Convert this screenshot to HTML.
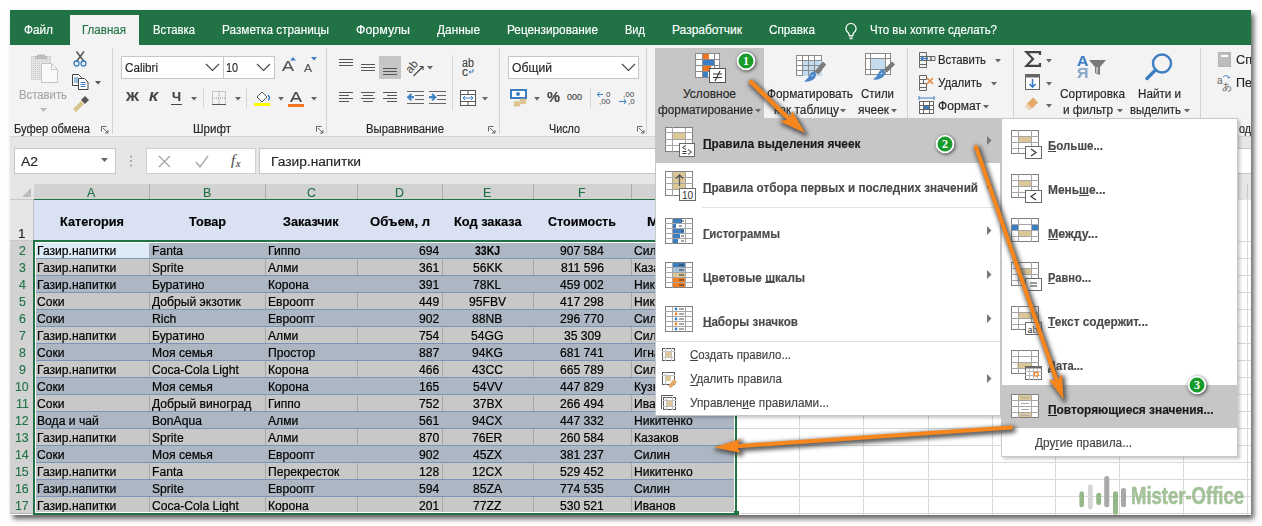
<!DOCTYPE html>
<html><head><meta charset="utf-8"><style>
html,body{margin:0;padding:0;width:1262px;height:526px;overflow:hidden;background:#fff;}
body{position:relative;font-family:"Liberation Sans",sans-serif;}
.r{position:absolute;box-sizing:border-box;}
svg.r{overflow:visible;}
.t{position:absolute;white-space:nowrap;line-height:1;transform-origin:0 0;font-family:"Liberation Sans",sans-serif;-webkit-text-stroke:0.15px currentColor;}
</style></head><body>
<div class="r" style="left:10px;top:10px;width:1241px;height:505px;background:#fff;box-shadow:3px 4px 5px rgba(0,0,0,0.6);"></div>
<div class="r" style="left:10px;top:10px;width:1241px;height:505px;overflow:hidden;"><div class="r" style="left:-10px;top:-10px;width:1262px;height:526px;">
<div class="r" style="left:10px;top:10px;width:1241px;height:35px;background:#217346;"></div>
<div class="r" style="left:70px;top:15px;width:69px;height:30px;background:#f3f3f3;"></div>
<div class="t" style="left:24.0px;top:24.1px;font-size:12px;color:#ffffff;transform:scaleX(0.9830);">Файл</div>
<div class="t" style="left:82.0px;top:24.1px;font-size:12px;color:#217346;transform:scaleX(0.9634);">Главная</div>
<div class="t" style="left:153.0px;top:24.1px;font-size:12px;color:#ffffff;transform:scaleX(0.9417);">Вставка</div>
<div class="t" style="left:222.0px;top:24.1px;font-size:12px;color:#ffffff;transform:scaleX(0.9829);">Разметка страницы</div>
<div class="t" style="left:356.0px;top:24.1px;font-size:12px;color:#ffffff;transform:scaleX(1.0341);">Формулы</div>
<div class="t" style="left:437.0px;top:24.1px;font-size:12px;color:#ffffff;transform:scaleX(0.9919);">Данные</div>
<div class="t" style="left:507.0px;top:24.1px;font-size:12px;color:#ffffff;transform:scaleX(0.9821);">Рецензирование</div>
<div class="t" style="left:625.0px;top:24.1px;font-size:12px;color:#ffffff;transform:scaleX(0.9213);">Вид</div>
<div class="t" style="left:672.0px;top:24.1px;font-size:12px;color:#ffffff;">Разработчик</div>
<div class="t" style="left:769.0px;top:24.1px;font-size:12px;color:#ffffff;transform:scaleX(0.9772);">Справка</div>
<div class="t" style="left:870.0px;top:24.1px;font-size:12px;color:#ffffff;transform:scaleX(0.9574);">Что вы хотите сделать?</div>
<svg class="r" style="left:843px;top:22px;" width="16" height="18" viewBox="0 0 16 18"><path d="M8 1.5a5 5 0 0 0-3 9c.6.5 1 1.2 1 2v1h4v-1c0-.8.4-1.5 1-2a5 5 0 0 0-3-9z" fill="none" stroke="#fff" stroke-width="1.2"/><path d="M6 15h4M6.5 16.8h3" stroke="#fff" stroke-width="1.1"/></svg>
<div class="r" style="left:10px;top:45px;width:1241px;height:92px;background:#f3f3f3;"></div>
<div class="r" style="left:10px;top:136px;width:1241px;height:1px;background:#d4d4d4;"></div>
<div class="r" style="left:112px;top:48px;width:1px;height:86px;background:#d2d2d2;"></div>
<div class="r" style="left:326px;top:48px;width:1px;height:86px;background:#d2d2d2;"></div>
<div class="r" style="left:499px;top:48px;width:1px;height:86px;background:#d2d2d2;"></div>
<div class="r" style="left:646px;top:48px;width:1px;height:86px;background:#d2d2d2;"></div>
<div class="r" style="left:907px;top:48px;width:1px;height:86px;background:#d2d2d2;"></div>
<div class="r" style="left:1013px;top:48px;width:1px;height:86px;background:#d2d2d2;"></div>
<div class="r" style="left:1200px;top:48px;width:1px;height:86px;background:#d2d2d2;"></div>
<div class="t" style="left:14.0px;top:122.6px;font-size:12px;color:#262626;transform:scaleX(0.9321);">Буфер обмена</div>
<div class="t" style="left:193.0px;top:122.6px;font-size:12px;color:#262626;transform:scaleX(0.9625);">Шрифт</div>
<div class="t" style="left:366.0px;top:122.6px;font-size:12px;color:#262626;transform:scaleX(0.9444);">Выравнивание</div>
<div class="t" style="left:549.0px;top:122.6px;font-size:12px;color:#262626;transform:scaleX(0.8983);">Число</div>
<div class="t" style="left:1239.0px;top:122.6px;font-size:12px;color:#262626;transform:scaleX(0.8949);">од</div>
<svg class="r" style="left:101px;top:126px;" width="8" height="8" viewBox="0 0 8 8"><path d="M0.5 0.5h5M0.5 0.5v5" stroke="#666" stroke-width="1" fill="none"/><path d="M2 2l5 5M7 4v3h-3" stroke="#666" stroke-width="1" fill="none"/></svg>
<svg class="r" style="left:316px;top:126px;" width="8" height="8" viewBox="0 0 8 8"><path d="M0.5 0.5h5M0.5 0.5v5" stroke="#666" stroke-width="1" fill="none"/><path d="M2 2l5 5M7 4v3h-3" stroke="#666" stroke-width="1" fill="none"/></svg>
<svg class="r" style="left:488px;top:126px;" width="8" height="8" viewBox="0 0 8 8"><path d="M0.5 0.5h5M0.5 0.5v5" stroke="#666" stroke-width="1" fill="none"/><path d="M2 2l5 5M7 4v3h-3" stroke="#666" stroke-width="1" fill="none"/></svg>
<svg class="r" style="left:637px;top:126px;" width="8" height="8" viewBox="0 0 8 8"><path d="M0.5 0.5h5M0.5 0.5v5" stroke="#666" stroke-width="1" fill="none"/><path d="M2 2l5 5M7 4v3h-3" stroke="#666" stroke-width="1" fill="none"/></svg>
<svg class="r" style="left:31px;top:53px;" width="30" height="32" viewBox="0 0 30 32"><defs><pattern id="dp" width="2" height="2" patternUnits="userSpaceOnUse"><rect width="2" height="2" fill="#e6e6e6"/><rect width="1" height="1" fill="#c8c8c8"/></pattern></defs><rect x="0.5" y="3.5" width="19" height="23" fill="url(#dp)" stroke="#d6d6d6"/><path d="M6 4V1.5h8V4z" fill="#bdbdbd"/><rect x="4" y="3" width="12" height="3" fill="#bdbdbd"/><path d="M10.5 10.5h10l6 6v13h-16z" fill="#fafafa" stroke="#c4c4c4"/><path d="M20.5 10.5v6h6" fill="none" stroke="#c4c4c4"/></svg>
<div class="t" style="left:19.0px;top:88.6px;font-size:12px;color:#a6a6a6;transform:scaleX(0.9437);">Вставить</div>
<svg class="r" style="left:40px;top:108px;" width="8" height="5" viewBox="0 0 8 5"><path d="M0 0h7l-3.5 4z" fill="#bbb"/></svg>
<svg class="r" style="left:73px;top:51px;" width="15" height="16" viewBox="0 0 15 16"><path d="M3.5 0.5l7.5 10M11 0.5L3.5 10.5" stroke="#5a5a5a" stroke-width="1.6"/><circle cx="3.5" cy="12.5" r="2.5" fill="none" stroke="#3c7ec2" stroke-width="1.3"/><circle cx="10.5" cy="12.5" r="2.5" fill="none" stroke="#3c7ec2" stroke-width="1.3"/></svg>
<svg class="r" style="left:72px;top:74px;" width="17" height="16" viewBox="0 0 17 16"><path d="M0.5 0.5h6l3 3v8h-9z" fill="#fff" stroke="#444"/><path d="M2 4h4M2 6h4M2 8h4" stroke="#3c7ec2"/><path d="M6.5 4.5h6l3.5 3.5v7.5h-9.5z" fill="#fff" stroke="#444"/><path d="M8.5 8.5h5M8.5 10.5h5M8.5 12.5h5" stroke="#3c7ec2"/></svg>
<svg class="r" style="left:95px;top:81px;" width="7" height="4" viewBox="0 0 7 4"><path d="M0 0h6l-3 3.5z" fill="#555"/></svg>
<svg class="r" style="left:72px;top:96px;" width="17" height="16" viewBox="0 0 17 16"><path d="M9 4l4-4 4 4-4 4z" fill="#555"/><path d="M1 13l8-8 3 3-8 8z" fill="#d9c38c"/></svg>
<div class="r" style="left:121px;top:56px;width:103px;height:23px;background:#fff;border:1px solid #c6c6c6;"></div>
<div class="r" style="left:223px;top:56px;width:52px;height:23px;background:#fff;border:1px solid #c6c6c6;"></div>
<div class="t" style="left:125.0px;top:61.6px;font-size:12px;color:#262626;transform:scaleX(0.9704);">Calibri</div>
<div class="t" style="left:226.0px;top:61.6px;font-size:12px;color:#262626;transform:scaleX(0.8991);">10</div>
<svg class="r" style="left:205px;top:63px;" width="15" height="9" viewBox="0 0 15 9"><path d="M1 1l6.5 6.5L14 1" stroke="#444" stroke-width="1.1" fill="none"/></svg>
<svg class="r" style="left:256px;top:63px;" width="15" height="9" viewBox="0 0 15 9"><path d="M1 1l6.5 6.5L14 1" stroke="#444" stroke-width="1.1" fill="none"/></svg>
<div class="t" style="left:282.0px;top:59.4px;font-size:14px;color:#555;transform:scaleX(1.2850);">A</div>
<svg class="r" style="left:290px;top:57px;" width="6" height="4" viewBox="0 0 6 4"><path d="M0 3.5L3 0l3 3.5z" fill="#3c7ec2"/></svg>
<div class="t" style="left:304.0px;top:62.7px;font-size:11px;color:#555;transform:scaleX(1.0903);">A</div>
<svg class="r" style="left:311px;top:57px;" width="6" height="4" viewBox="0 0 6 4"><path d="M0 0h6L3 3.5z" fill="#3c7ec2"/></svg>
<div class="t" style="left:126.0px;top:90.6px;font-size:12px;color:#444;font-weight:bold;transform:scaleX(1.1987);">Ж</div>
<div class="t" style="left:149.0px;top:90.6px;font-size:12px;color:#444;font-weight:bold;transform:scaleX(1.2289);font-style:italic;">К</div>
<div class="t" style="left:172.0px;top:90.6px;font-size:12px;color:#444;font-weight:bold;transform:scaleX(1.0674);">Ч</div>
<div class="r" style="left:171px;top:104px;width:11px;height:1px;background:#444;"></div>
<svg class="r" style="left:191px;top:97px;" width="7" height="4" viewBox="0 0 7 4"><path d="M0 0h6l-3 3.5z" fill="#666"/></svg>
<svg class="r" style="left:235px;top:97px;" width="7" height="4" viewBox="0 0 7 4"><path d="M0 0h6l-3 3.5z" fill="#666"/></svg>
<svg class="r" style="left:278px;top:97px;" width="7" height="4" viewBox="0 0 7 4"><path d="M0 0h6l-3 3.5z" fill="#666"/></svg>
<svg class="r" style="left:311px;top:97px;" width="7" height="4" viewBox="0 0 7 4"><path d="M0 0h6l-3 3.5z" fill="#666"/></svg>
<div class="r" style="left:203px;top:88px;width:1px;height:20px;background:#d6d6d6;"></div>
<div class="r" style="left:246px;top:88px;width:1px;height:20px;background:#d6d6d6;"></div>
<svg class="r" style="left:212px;top:91px;" width="14" height="14" viewBox="0 0 14 14"><rect x="0.5" y="0.5" width="13" height="13" fill="none" stroke="#999" stroke-dasharray="1 1"/><path d="M7 0v14M0 7h14" stroke="#999" stroke-dasharray="1 1"/><path d="M0 13.5h14" stroke="#555"/></svg>
<svg class="r" style="left:254px;top:90px;" width="17" height="17" viewBox="0 0 17 17"><path d="M3 7l5-5 5 5-5 5z" fill="#fff" stroke="#555"/><path d="M14 5c2 2 2 4 0 5" stroke="#3c7ec2" stroke-width="1.5" fill="none"/><rect x="0" y="13" width="16" height="3" fill="#ffff00"/></svg>
<div class="t" style="left:290.0px;top:90.4px;font-size:14px;color:#444;transform:scaleX(1.2850);">A</div>
<div class="r" style="left:288px;top:104px;width:16px;height:3px;background:#f4741f;"></div>
<div class="r" style="left:379px;top:56px;width:22px;height:23px;background:#c6c6c6;"></div>
<svg class="r" style="left:339px;top:59px;" width="16" height="10" viewBox="0 0 16 10"><path d="M0 0.5h14" stroke="#555" stroke-width="1"/><path d="M0 3.5h14" stroke="#555" stroke-width="1"/><path d="M0 6.5h14" stroke="#555" stroke-width="1"/></svg>
<svg class="r" style="left:361px;top:64px;" width="16" height="10" viewBox="0 0 16 10"><path d="M0 0.5h14" stroke="#555" stroke-width="1"/><path d="M0 3.5h14" stroke="#555" stroke-width="1"/><path d="M0 6.5h14" stroke="#555" stroke-width="1"/></svg>
<svg class="r" style="left:383px;top:68px;" width="16" height="10" viewBox="0 0 16 10"><path d="M0 0.5h14" stroke="#555" stroke-width="1"/><path d="M0 3.5h14" stroke="#555" stroke-width="1"/><path d="M0 6.5h14" stroke="#555" stroke-width="1"/></svg>
<svg class="r" style="left:339px;top:92px;" width="16" height="13" viewBox="0 0 16 13"><path d="M0 0.5h14" stroke="#555" stroke-width="1"/><path d="M0 3.5h10" stroke="#555" stroke-width="1"/><path d="M0 6.5h14" stroke="#555" stroke-width="1"/><path d="M0 9.5h10" stroke="#555" stroke-width="1"/></svg>
<svg class="r" style="left:361px;top:92px;" width="16" height="13" viewBox="0 0 16 13"><path d="M0 0.5h14" stroke="#555" stroke-width="1"/><path d="M2 3.5h10" stroke="#555" stroke-width="1"/><path d="M0 6.5h14" stroke="#555" stroke-width="1"/><path d="M2 9.5h10" stroke="#555" stroke-width="1"/></svg>
<svg class="r" style="left:383px;top:92px;" width="16" height="13" viewBox="0 0 16 13"><path d="M0 0.5h14" stroke="#555" stroke-width="1"/><path d="M4 3.5h10" stroke="#555" stroke-width="1"/><path d="M0 6.5h14" stroke="#555" stroke-width="1"/><path d="M4 9.5h10" stroke="#555" stroke-width="1"/></svg>
<svg class="r" style="left:407px;top:91px;" width="17" height="14" viewBox="0 0 17 14"><path d="M0 0.5h17M8 4.5h9M8 8.5h9M0 12.5h17" stroke="#666"/><path d="M1.5 6.2h5.5" stroke="#3c7ec2" stroke-width="2.2"/><path d="M4.5 3L1 6.2l3.5 3.2" stroke="#3c7ec2" stroke-width="1.8" fill="none"/></svg>
<svg class="r" style="left:429px;top:91px;" width="17" height="14" viewBox="0 0 17 14"><path d="M0 0.5h17M8 4.5h9M8 8.5h9M0 12.5h17" stroke="#666"/><path d="M0 6.2h5.5" stroke="#3c7ec2" stroke-width="2.2"/><path d="M3 3l3.5 3.2L3 9.4" stroke="#3c7ec2" stroke-width="1.8" fill="none"/></svg>
<svg class="r" style="left:406px;top:59px;" width="22" height="20" viewBox="0 0 22 20"><text x="0" y="0" transform="translate(4.5,15) rotate(-50)" font-size="11.5" font-family="Liberation Sans" fill="#444">ab</text><path d="M7.5 17l9.5-9.5M13.5 7.5h3.5v3.5" stroke="#444" stroke-width="1.1" fill="none"/></svg>
<svg class="r" style="left:427px;top:66px;" width="7" height="4" viewBox="0 0 7 4"><path d="M0 0h6l-3 3.5z" fill="#666"/></svg>
<div class="r" style="left:452px;top:55px;width:1px;height:55px;background:#d6d6d6;"></div>
<div class="t" style="left:462.0px;top:56.6px;font-size:12px;color:#444;transform:scaleX(0.8991);">ab</div>
<div class="t" style="left:462.0px;top:65.6px;font-size:12px;color:#444;">c</div>
<svg class="r" style="left:468px;top:69px;" width="6" height="5" viewBox="0 0 6 5"><path d="M5 0v3H1M2.5 1.5L1 3l1.5 1.5" stroke="#3c7ec2" fill="none"/></svg>
<svg class="r" style="left:460px;top:90px;" width="16" height="16" viewBox="0 0 16 16"><rect x="0.5" y="0.5" width="15" height="15" fill="#fff" stroke="#555"/><path d="M0 4.5h16M0 11.5h16M8 0v4M8 12v4" stroke="#555"/><path d="M3 8h10M5 6l-2 2 2 2M11 6l2 2-2 2" stroke="#3c7ec2" fill="none"/></svg>
<svg class="r" style="left:482px;top:97px;" width="7" height="4" viewBox="0 0 7 4"><path d="M0 0h6l-3 3.5z" fill="#666"/></svg>
<div class="r" style="left:508px;top:56px;width:131px;height:23px;background:#fff;border:1px solid #c6c6c6;"></div>
<div class="t" style="left:512.0px;top:61.6px;font-size:12px;color:#262626;transform:scaleX(1.0130);">Общий</div>
<svg class="r" style="left:621px;top:63px;" width="15" height="9" viewBox="0 0 15 9"><path d="M1 1l6.5 6.5L14 1" stroke="#444" stroke-width="1.1" fill="none"/></svg>
<svg class="r" style="left:510px;top:89px;" width="18" height="18" viewBox="0 0 18 18"><rect x="1" y="1" width="15" height="8" fill="#fff" stroke="#3c7ec2" stroke-width="2"/><circle cx="8" cy="5" r="2" fill="#3c7ec2"/><ellipse cx="13" cy="11" rx="3.5" ry="1.5" fill="#dcc38e"/><ellipse cx="13" cy="13.5" rx="3.5" ry="1.5" fill="#dcc38e"/><ellipse cx="7" cy="13.5" rx="3.5" ry="1.5" fill="#dcc38e"/><ellipse cx="7" cy="16" rx="3.5" ry="1.5" fill="#dcc38e"/></svg>
<svg class="r" style="left:534px;top:97px;" width="7" height="4" viewBox="0 0 7 4"><path d="M0 0h6l-3 3.5z" fill="#666"/></svg>
<div class="t" style="left:547.0px;top:90.4px;font-size:14px;color:#444;font-weight:bold;transform:scaleX(1.0443);">%</div>
<div class="t" style="left:567.0px;top:92.9px;font-size:9px;color:#444;">000</div>
<div class="r" style="left:590px;top:88px;width:1px;height:20px;background:#d6d6d6;"></div>
<svg class="r" style="left:597px;top:90px;" width="18" height="16" viewBox="0 0 18 16"><text x="9" y="7" font-size="8" font-family="Liberation Sans" fill="#444">0</text><text x="2" y="14" font-size="8" font-family="Liberation Sans" fill="#444">,00</text><path d="M0 4.5h6M2.5 2L0.5 4.5 2.5 7" stroke="#3c7ec2" fill="none"/></svg>
<svg class="r" style="left:619px;top:90px;" width="18" height="16" viewBox="0 0 18 16"><text x="4" y="7" font-size="8" font-family="Liberation Sans" fill="#444">,00</text><text x="9" y="14" font-size="8" font-family="Liberation Sans" fill="#444">,0</text><path d="M0 11.5h7M5 9l2 2.5L5 14" stroke="#3c7ec2" fill="none"/></svg>
<div class="r" style="left:655px;top:48px;width:109px;height:70px;background:#c5c5c5;"></div>
<svg class="r" style="left:695px;top:53px;" width="31" height="31" viewBox="0 0 31 31"><g stroke="#8a8a8a" fill="#fff"><rect x="0.5" y="0.5" width="24" height="24"/></g><rect x="8" y="1" width="6" height="5" fill="#f4741f"/><rect x="8" y="7" width="12" height="5" fill="#3c7ec2"/><rect x="8" y="13" width="8" height="5" fill="#f4741f"/><rect x="8" y="19" width="5" height="5" fill="#3c7ec2"/><path d="M0 6.5h25M0 12.5h25M0 18.5h25M7.5 0v25M19.5 0v25" stroke="#8a8a8a"/><rect x="14.5" y="15.5" width="16" height="14" fill="#fff" stroke="#555"/><path d="M18 21h9M18 24.5h9M25 18l-5 10" stroke="#333" stroke-width="1.1"/></svg>
<div class="t" style="left:683.0px;top:87.6px;font-size:12px;color:#262626;">Условное</div>
<div class="t" style="left:658.0px;top:103.6px;font-size:12px;color:#262626;transform:scaleX(0.9861);">форматирование</div>
<svg class="r" style="left:755px;top:109px;" width="7" height="4" viewBox="0 0 7 4"><path d="M0 0h6l-3 3.5z" fill="#666"/></svg>
<svg class="r" style="left:796px;top:53px;" width="32" height="32" viewBox="0 0 32 32"><rect x="0.5" y="2.5" width="25" height="20" fill="#fff" stroke="#8a8a8a"/><rect x="7" y="8" width="19" height="15" fill="#c5dbee"/><path d="M0 7.5h26M0 12.5h26M0 17.5h26M6.5 2v21M12.5 2v21M18.5 2v21" stroke="#8a8a8a"/><path d="M28.5 10l-8 10" stroke="#7a7a7a" stroke-width="4.5" stroke-linecap="butt"/><path d="M19 18.5c-2.5-0.5-4.5 1-5.5 3.5-1 2.5-3 4.5-5.5 6.5 4 0.5 8.5-0.5 10.5-3 1.8-2.2 2-4.5 0.5-7z" fill="#4a86c6"/><path d="M17.5 21.5c-1 0-1.8 0.8-2 2 0.8-0.3 1.6-0.6 2-2z" fill="#fff"/></svg>
<div class="t" style="left:767.0px;top:87.6px;font-size:12px;color:#262626;transform:scaleX(0.9877);">Форматировать</div>
<div class="t" style="left:774.0px;top:103.6px;font-size:12px;color:#262626;transform:scaleX(0.9891);">как таблицу</div>
<svg class="r" style="left:840px;top:109px;" width="7" height="4" viewBox="0 0 7 4"><path d="M0 0h6l-3 3.5z" fill="#666"/></svg>
<svg class="r" style="left:865px;top:51px;" width="32" height="32" viewBox="0 0 32 32"><rect x="0.5" y="2.5" width="25" height="21" fill="#fff" stroke="#8a8a8a"/><rect x="6" y="8" width="14" height="10" fill="#c5dbee"/><path d="M0 7.5h26M0 18.5h26M5.5 2v22M20.5 2v22" stroke="#8a8a8a"/><path d="M28.5 12l-8 8" stroke="#7a7a7a" stroke-width="4.5" stroke-linecap="butt"/><path d="M19 18.5c-2.5-0.5-4.5 1-5.5 3.5-1 2.5-3 4.5-5.5 6.5 4 0.5 8.5-0.5 10.5-3 1.8-2.2 2-4.5 0.5-7z" fill="#4a86c6"/><path d="M17.5 21.5c-1 0-1.8 0.8-2 2 0.8-0.3 1.6-0.6 2-2z" fill="#fff"/></svg>
<div class="t" style="left:861.0px;top:87.6px;font-size:12px;color:#262626;transform:scaleX(0.9546);">Стили</div>
<div class="t" style="left:858.0px;top:103.6px;font-size:12px;color:#262626;transform:scaleX(0.9890);">ячеек</div>
<svg class="r" style="left:891px;top:109px;" width="7" height="4" viewBox="0 0 7 4"><path d="M0 0h6l-3 3.5z" fill="#666"/></svg>
<svg class="r" style="left:918px;top:51px;" width="18" height="17" viewBox="0 0 18 17"><path d="M1.5 1.5h7v4h-7zM1.5 5.5h7v4h-7zM1.5 9.5h7v4h-7zM1.5 13.5h7v3h-7zM9 5.5h4v4h-4zM13 5.5h4v4h-4z" fill="none" stroke="#666"/><path d="M3 7.5h7M5 5.5l-2 2 2 2" stroke="#3c7ec2" stroke-width="1.3" fill="none"/></svg>
<div class="t" style="left:938.0px;top:53.6px;font-size:12px;color:#262626;transform:scaleX(0.9437);">Вставить</div>
<svg class="r" style="left:995px;top:59px;" width="7" height="4" viewBox="0 0 7 4"><path d="M0 0h6l-3 3.5z" fill="#666"/></svg>
<svg class="r" style="left:918px;top:74px;" width="18" height="17" viewBox="0 0 18 17"><path d="M1.5 1.5h7v4h-7zM1.5 5.5h4v4h-4zM1.5 9.5h7v4h-7zM1.5 13.5h7v3h-7z" fill="none" stroke="#666"/><path d="M9 4l6 6M15 4l-6 6" stroke="#e08b3a" stroke-width="1.6"/></svg>
<div class="t" style="left:938.0px;top:76.6px;font-size:12px;color:#262626;transform:scaleX(0.9604);">Удалить</div>
<svg class="r" style="left:991px;top:82px;" width="7" height="4" viewBox="0 0 7 4"><path d="M0 0h6l-3 3.5z" fill="#666"/></svg>
<svg class="r" style="left:918px;top:96px;" width="18" height="18" viewBox="0 0 18 18"><path d="M1 2h15M1 0v4M16 0v4" stroke="#3c7ec2"/><rect x="1.5" y="5.5" width="14" height="12" fill="#fff" stroke="#666"/><path d="M1 9.5h15M1 13.5h15M5.5 5v13M11.5 5v13" stroke="#666"/><rect x="6" y="10" width="5" height="3" fill="#3c7ec2"/></svg>
<div class="t" style="left:938.0px;top:99.6px;font-size:12px;color:#262626;transform:scaleX(1.0088);">Формат</div>
<svg class="r" style="left:983px;top:105px;" width="7" height="4" viewBox="0 0 7 4"><path d="M0 0h6l-3 3.5z" fill="#666"/></svg>
<svg class="r" style="left:1025px;top:51px;" width="16" height="16" viewBox="0 0 16 16"><path d="M15 4V1.2H1.5l6.5 6.8-6.5 6.8H15V12" stroke="#444" stroke-width="2.2" fill="none" stroke-linejoin="miter"/></svg>
<svg class="r" style="left:1046px;top:59px;" width="7" height="4" viewBox="0 0 7 4"><path d="M0 0h6l-3 3.5z" fill="#666"/></svg>
<svg class="r" style="left:1025px;top:74px;" width="16" height="17" viewBox="0 0 16 17"><rect x="0.5" y="0.5" width="14" height="15" fill="#fff" stroke="#666"/><rect x="0.5" y="0.5" width="14" height="3" fill="#666"/><path d="M7.5 5v8M4.5 10l3 3 3-3" stroke="#3c7ec2" stroke-width="1.6" fill="none"/></svg>
<svg class="r" style="left:1046px;top:82px;" width="7" height="4" viewBox="0 0 7 4"><path d="M0 0h6l-3 3.5z" fill="#666"/></svg>
<svg class="r" style="left:1025px;top:97px;" width="14" height="14" viewBox="0 0 14 14"><path d="M8 0.5l5 5-6 6-5-5z" fill="#e3a86a"/><path d="M2 6.5l5 5-1.5 1.5h-2l-3-3v-2z" fill="#f1d2b0"/></svg>
<svg class="r" style="left:1046px;top:104px;" width="7" height="4" viewBox="0 0 7 4"><path d="M0 0h6l-3 3.5z" fill="#666"/></svg>
<div class="t" style="left:1077.0px;top:52.7px;font-size:15px;color:#3c7ec2;font-weight:bold;transform:scaleX(1.0616);">A</div>
<div class="t" style="left:1077.0px;top:65.2px;font-size:15px;color:#8aa9c9;font-weight:bold;transform:scaleX(1.0667);">Я</div>
<svg class="r" style="left:1089px;top:60px;" width="18" height="16" viewBox="0 0 18 16"><path d="M0 0h17l-6 7v8l-5-2V7z" fill="#7a7a7a"/><path d="M8 7v6" stroke="#fff"/></svg>
<div class="t" style="left:1060.0px;top:87.6px;font-size:12px;color:#262626;transform:scaleX(0.9870);">Сортировка</div>
<div class="t" style="left:1063.0px;top:103.6px;font-size:12px;color:#262626;transform:scaleX(0.9785);">и фильтр</div>
<svg class="r" style="left:1117px;top:109px;" width="7" height="4" viewBox="0 0 7 4"><path d="M0 0h6l-3 3.5z" fill="#666"/></svg>
<svg class="r" style="left:1145px;top:52px;" width="30" height="29" viewBox="0 0 30 29"><circle cx="17" cy="11.5" r="9" fill="none" stroke="#3c7ec2" stroke-width="2.4"/><path d="M10.5 18L2 26.5" stroke="#3c7ec2" stroke-width="3.4" stroke-linecap="round"/></svg>
<div class="t" style="left:1138.0px;top:87.6px;font-size:12px;color:#262626;transform:scaleX(0.9711);">Найти и</div>
<div class="t" style="left:1130.0px;top:103.6px;font-size:12px;color:#262626;transform:scaleX(0.9492);">выделить</div>
<svg class="r" style="left:1184px;top:109px;" width="7" height="4" viewBox="0 0 7 4"><path d="M0 0h6l-3 3.5z" fill="#666"/></svg>
<svg class="r" style="left:1218px;top:52px;" width="14" height="15" viewBox="0 0 14 15"><rect x="0.5" y="0.5" width="12" height="14" fill="#bdbdbd" stroke="#b5b5b5"/><rect x="3" y="3" width="7" height="2" fill="#fff"/></svg>
<div class="t" style="left:1236.0px;top:53.6px;font-size:12px;color:#262626;transform:scaleX(1.0551);">Сп</div>
<svg class="r" style="left:1217px;top:74px;" width="16" height="17" viewBox="0 0 16 17"><text x="0" y="10" font-size="10" font-family="Liberation Sans" fill="#666">a</text><text x="5" y="16" font-size="10" font-family="Liberation Serif" fill="#666">あ</text><path d="M6 3c2-2 5-2 6 1M12 4l-1.5-1M12 4l1-1.5" stroke="#3c7ec2" fill="none"/></svg>
<div class="t" style="left:1236.0px;top:76.6px;font-size:12px;color:#262626;transform:scaleX(1.0459);">Пе</div>
<div class="r" style="left:10px;top:137px;width:1241px;height:47px;background:#e6e6e6;"></div>
<div class="r" style="left:14px;top:148px;width:102px;height:26px;background:#fff;border:1px solid #c6c6c6;"></div>
<div class="t" style="left:21.0px;top:155.6px;font-size:12px;color:#262626;transform:scaleX(1.1582);">A2</div>
<svg class="r" style="left:101px;top:158px;" width="8" height="5" viewBox="0 0 8 5"><path d="M0 0h7l-3.5 4z" fill="#666"/></svg>
<svg class="r" style="left:129px;top:155px;" width="4" height="12" viewBox="0 0 4 12"><circle cx="2" cy="1.5" r="1" fill="#999"/><circle cx="2" cy="6" r="1" fill="#999"/><circle cx="2" cy="10.5" r="1" fill="#999"/></svg>
<div class="r" style="left:146px;top:148px;width:110px;height:26px;background:#fff;border:1px solid #d0d0d0;"></div>
<svg class="r" style="left:158px;top:155px;" width="13" height="13" viewBox="0 0 13 13"><path d="M1 1l11 11M12 1L1 12" stroke="#a6a6a6" stroke-width="1.3"/></svg>
<svg class="r" style="left:195px;top:155px;" width="14" height="13" viewBox="0 0 14 13"><path d="M1 7l4 5 8-11" stroke="#b0b0b0" stroke-width="1.6" fill="none"/></svg>
<div class="t" style="left:231px;top:153px;font-size:15px;color:#555;font-family:'Liberation Serif',serif;font-style:italic;">f</div>
<div class="t" style="left:236px;top:159px;font-size:10px;color:#444;font-family:'Liberation Serif',serif;font-style:italic;">x</div>
<div class="r" style="left:259px;top:148px;width:1000px;height:26px;background:#fff;border:1px solid #c6c6c6;"></div>
<div class="t" style="left:271.0px;top:155.6px;font-size:12px;color:#262626;transform:scaleX(1.1461);">Газир.напитки</div>
<div class="r" style="left:10px;top:184px;width:24px;height:16px;background:#e6e6e6;"></div>
<svg class="r" style="left:22px;top:188px;" width="10" height="10" viewBox="0 0 10 10"><path d="M9 0v9H0z" fill="#bcbcbc"/></svg>
<div class="r" style="left:34px;top:184px;width:115px;height:16px;background:#d2d2d2;"></div>
<div class="t" style="left:87.4px;top:185.5px;font-size:13px;color:#217346;transform:scaleX(0.9500);">A</div>
<div class="r" style="left:149px;top:184px;width:116px;height:16px;background:#d2d2d2;"></div>
<div class="t" style="left:202.9px;top:185.5px;font-size:13px;color:#217346;transform:scaleX(0.9500);">B</div>
<div class="r" style="left:265px;top:184px;width:92px;height:16px;background:#d2d2d2;"></div>
<div class="t" style="left:306.5px;top:185.5px;font-size:13px;color:#217346;transform:scaleX(0.9500);">C</div>
<div class="r" style="left:357px;top:184px;width:85px;height:16px;background:#d2d2d2;"></div>
<div class="t" style="left:395.0px;top:185.5px;font-size:13px;color:#217346;transform:scaleX(0.9500);">D</div>
<div class="r" style="left:442px;top:184px;width:91px;height:16px;background:#d2d2d2;"></div>
<div class="t" style="left:483.4px;top:185.5px;font-size:13px;color:#217346;transform:scaleX(0.9500);">E</div>
<div class="r" style="left:533px;top:184px;width:98px;height:16px;background:#d2d2d2;"></div>
<div class="t" style="left:578.2px;top:185.5px;font-size:13px;color:#217346;transform:scaleX(0.9500);">F</div>
<div class="r" style="left:631px;top:184px;width:104px;height:16px;background:#d2d2d2;"></div>
<div class="t" style="left:678.2px;top:185.5px;font-size:13px;color:#217346;transform:scaleX(0.9500);">G</div>
<div class="r" style="left:735px;top:184px;width:64px;height:16px;background:#e6e6e6;"></div>
<div class="t" style="left:762.5px;top:185.5px;font-size:13px;color:#444;transform:scaleX(0.9500);">H</div>
<div class="r" style="left:799px;top:184px;width:64px;height:16px;background:#e6e6e6;"></div>
<div class="t" style="left:829.3px;top:185.5px;font-size:13px;color:#444;transform:scaleX(0.9500);">I</div>
<div class="r" style="left:863px;top:184px;width:65px;height:16px;background:#e6e6e6;"></div>
<div class="t" style="left:892.4px;top:185.5px;font-size:13px;color:#444;transform:scaleX(0.9500);">J</div>
<div class="r" style="left:928px;top:184px;width:64px;height:16px;background:#e6e6e6;"></div>
<div class="t" style="left:955.9px;top:185.5px;font-size:13px;color:#444;transform:scaleX(0.9500);">K</div>
<div class="r" style="left:992px;top:184px;width:63px;height:16px;background:#e6e6e6;"></div>
<div class="t" style="left:1020.1px;top:185.5px;font-size:13px;color:#444;transform:scaleX(0.9500);">L</div>
<div class="r" style="left:1055px;top:184px;width:64px;height:16px;background:#e6e6e6;"></div>
<div class="t" style="left:1081.9px;top:185.5px;font-size:13px;color:#444;transform:scaleX(0.9500);">M</div>
<div class="r" style="left:1119px;top:184px;width:64px;height:16px;background:#e6e6e6;"></div>
<div class="t" style="left:1146.5px;top:185.5px;font-size:13px;color:#444;transform:scaleX(0.9500);">N</div>
<div class="r" style="left:1183px;top:184px;width:64px;height:16px;background:#e6e6e6;"></div>
<div class="t" style="left:1210.2px;top:185.5px;font-size:13px;color:#444;transform:scaleX(0.9500);">O</div>
<div class="r" style="left:1247px;top:184px;width:64px;height:16px;background:#e6e6e6;"></div>
<div class="t" style="left:1274.9px;top:185.5px;font-size:13px;color:#444;transform:scaleX(0.9500);">P</div>
<div class="r" style="left:149px;top:184px;width:1px;height:15px;background:#ababab;"></div>
<div class="r" style="left:265px;top:184px;width:1px;height:15px;background:#ababab;"></div>
<div class="r" style="left:357px;top:184px;width:1px;height:15px;background:#ababab;"></div>
<div class="r" style="left:442px;top:184px;width:1px;height:15px;background:#ababab;"></div>
<div class="r" style="left:533px;top:184px;width:1px;height:15px;background:#ababab;"></div>
<div class="r" style="left:631px;top:184px;width:1px;height:15px;background:#ababab;"></div>
<div class="r" style="left:735px;top:184px;width:1px;height:15px;background:#ababab;"></div>
<div class="r" style="left:799px;top:184px;width:1px;height:15px;background:#c8c8c8;"></div>
<div class="r" style="left:863px;top:184px;width:1px;height:15px;background:#c8c8c8;"></div>
<div class="r" style="left:928px;top:184px;width:1px;height:15px;background:#c8c8c8;"></div>
<div class="r" style="left:992px;top:184px;width:1px;height:15px;background:#c8c8c8;"></div>
<div class="r" style="left:1055px;top:184px;width:1px;height:15px;background:#c8c8c8;"></div>
<div class="r" style="left:1119px;top:184px;width:1px;height:15px;background:#c8c8c8;"></div>
<div class="r" style="left:1183px;top:184px;width:1px;height:15px;background:#c8c8c8;"></div>
<div class="r" style="left:1247px;top:184px;width:1px;height:15px;background:#c8c8c8;"></div>
<div class="r" style="left:1311px;top:184px;width:1px;height:15px;background:#c8c8c8;"></div>
<div class="r" style="left:34px;top:199px;width:703px;height:2px;background:#217346;"></div>
<div class="r" style="left:10px;top:199px;width:24px;height:1px;background:#c8c8c8;"></div>
<div class="r" style="left:34px;top:200px;width:701px;height:41px;background:#dae1f3;"></div>
<div class="r" style="left:10px;top:200px;width:24px;height:41px;background:#e6e6e6;"></div>
<div class="r" style="left:10px;top:240px;width:24px;height:1px;background:#c8c8c8;"></div>
<div class="r" style="left:33px;top:200px;width:1px;height:41px;background:#c0c0c0;"></div>
<div class="t" style="left:18.2px;top:226.5px;font-size:13px;color:#262626;transform:scaleX(1.0375);">1</div>
<div class="t" style="left:59.5px;top:215.6px;font-size:12px;color:#000;font-weight:bold;transform:scaleX(1.0566);">Категория</div>
<div class="t" style="left:188.5px;top:215.6px;font-size:12px;color:#000;font-weight:bold;transform:scaleX(1.0534);">Товар</div>
<div class="t" style="left:283.2px;top:215.6px;font-size:12px;color:#000;font-weight:bold;transform:scaleX(1.0516);">Заказчик</div>
<div class="t" style="left:369.5px;top:215.6px;font-size:12px;color:#000;font-weight:bold;transform:scaleX(1.0905);">Объем, л</div>
<div class="t" style="left:453.8px;top:215.6px;font-size:12px;color:#000;font-weight:bold;transform:scaleX(1.0675);">Код заказа</div>
<div class="t" style="left:548.0px;top:215.6px;font-size:12px;color:#000;font-weight:bold;transform:scaleX(1.0477);">Стоимость</div>
<div class="t" style="left:647.0px;top:215.6px;font-size:12px;color:#000;font-weight:bold;transform:scaleX(1.1889);">Менеджер</div>
<div class="r" style="left:34px;top:241px;width:701px;height:17px;background:#adb7c3;"></div>
<div class="r" style="left:34px;top:241px;width:701px;height:1px;background:#7a98b6;"></div>
<div class="r" style="left:10px;top:241px;width:24px;height:17px;background:#d2d2d2;"></div>
<div class="r" style="left:10px;top:258px;width:24px;height:1px;background:#b4b4b4;"></div>
<div class="t" style="left:18.6px;top:243.5px;font-size:13px;color:#217346;transform:scaleX(0.9500);">2</div>
<div class="r" style="left:35px;top:242px;width:114px;height:16px;background:#ddebf7;"></div>
<div class="t" style="left:37.0px;top:244.6px;font-size:12px;color:#000;transform:scaleX(1.0100);-webkit-text-stroke:0.2px #000;">Газир.напитки</div>
<div class="t" style="left:152.0px;top:244.6px;font-size:12px;color:#000;transform:scaleX(1.0100);-webkit-text-stroke:0.2px #000;">Fanta</div>
<div class="t" style="left:268.0px;top:244.6px;font-size:12px;color:#000;transform:scaleX(1.0100);-webkit-text-stroke:0.2px #000;">Гиппо</div>
<div class="t" style="left:418.8px;top:244.6px;font-size:12px;color:#000;transform:scaleX(1.0100);-webkit-text-stroke:0.2px #000;">694</div>
<div class="t" style="left:475.0px;top:244.6px;font-size:12px;color:#000;font-weight:bold;transform:scaleX(0.8715);">33KJ</div>
<div class="t" style="left:560.1px;top:244.6px;font-size:12px;color:#000;transform:scaleX(1.0100);-webkit-text-stroke:0.2px #000;">907 584</div>
<div class="t" style="left:634.0px;top:244.6px;font-size:12px;color:#000;transform:scaleX(1.0100);-webkit-text-stroke:0.2px #000;">Силин</div>
<div class="r" style="left:34px;top:258px;width:701px;height:17px;background:#c8c8c8;"></div>
<div class="r" style="left:34px;top:258px;width:701px;height:1px;background:#7a98b6;"></div>
<div class="r" style="left:10px;top:258px;width:24px;height:17px;background:#d2d2d2;"></div>
<div class="r" style="left:10px;top:275px;width:24px;height:1px;background:#b4b4b4;"></div>
<div class="t" style="left:18.6px;top:260.5px;font-size:13px;color:#217346;transform:scaleX(0.9500);">3</div>
<div class="r" style="left:149px;top:259px;width:1px;height:16px;background:#a8a8a8;"></div>
<div class="r" style="left:265px;top:259px;width:1px;height:16px;background:#a8a8a8;"></div>
<div class="r" style="left:357px;top:259px;width:1px;height:16px;background:#a8a8a8;"></div>
<div class="r" style="left:442px;top:259px;width:1px;height:16px;background:#a8a8a8;"></div>
<div class="r" style="left:533px;top:259px;width:1px;height:16px;background:#a8a8a8;"></div>
<div class="r" style="left:631px;top:259px;width:1px;height:16px;background:#a8a8a8;"></div>
<div class="t" style="left:37.0px;top:261.6px;font-size:12px;color:#000;transform:scaleX(1.0100);-webkit-text-stroke:0.2px #000;">Газир.напитки</div>
<div class="t" style="left:152.0px;top:261.6px;font-size:12px;color:#000;transform:scaleX(1.0100);-webkit-text-stroke:0.2px #000;">Sprite</div>
<div class="t" style="left:268.0px;top:261.6px;font-size:12px;color:#000;transform:scaleX(1.0100);-webkit-text-stroke:0.2px #000;">Алми</div>
<div class="t" style="left:418.8px;top:261.6px;font-size:12px;color:#000;transform:scaleX(1.0100);-webkit-text-stroke:0.2px #000;">361</div>
<div class="t" style="left:472.7px;top:261.6px;font-size:12px;color:#000;transform:scaleX(1.0100);-webkit-text-stroke:0.2px #000;">56KK</div>
<div class="t" style="left:560.5px;top:261.6px;font-size:12px;color:#000;transform:scaleX(1.0100);-webkit-text-stroke:0.2px #000;">811 596</div>
<div class="t" style="left:634.0px;top:261.6px;font-size:12px;color:#000;transform:scaleX(1.0100);-webkit-text-stroke:0.2px #000;">Казаков</div>
<div class="r" style="left:34px;top:275px;width:701px;height:17px;background:#adb7c3;"></div>
<div class="r" style="left:34px;top:275px;width:701px;height:1px;background:#7a98b6;"></div>
<div class="r" style="left:10px;top:275px;width:24px;height:17px;background:#d2d2d2;"></div>
<div class="r" style="left:10px;top:292px;width:24px;height:1px;background:#b4b4b4;"></div>
<div class="t" style="left:18.6px;top:277.5px;font-size:13px;color:#217346;transform:scaleX(0.9500);">4</div>
<div class="t" style="left:37.0px;top:278.6px;font-size:12px;color:#000;transform:scaleX(1.0100);-webkit-text-stroke:0.2px #000;">Газир.напитки</div>
<div class="t" style="left:152.0px;top:278.6px;font-size:12px;color:#000;transform:scaleX(1.0100);-webkit-text-stroke:0.2px #000;">Буратино</div>
<div class="t" style="left:268.0px;top:278.6px;font-size:12px;color:#000;transform:scaleX(1.0100);-webkit-text-stroke:0.2px #000;">Корона</div>
<div class="t" style="left:418.8px;top:278.6px;font-size:12px;color:#000;transform:scaleX(1.0100);-webkit-text-stroke:0.2px #000;">391</div>
<div class="t" style="left:473.3px;top:278.6px;font-size:12px;color:#000;transform:scaleX(1.0100);-webkit-text-stroke:0.2px #000;">78KL</div>
<div class="t" style="left:560.1px;top:278.6px;font-size:12px;color:#000;transform:scaleX(1.0100);-webkit-text-stroke:0.2px #000;">459 002</div>
<div class="t" style="left:634.0px;top:278.6px;font-size:12px;color:#000;transform:scaleX(1.0100);-webkit-text-stroke:0.2px #000;">Никитенко</div>
<div class="r" style="left:34px;top:292px;width:701px;height:17px;background:#c8c8c8;"></div>
<div class="r" style="left:34px;top:292px;width:701px;height:1px;background:#7a98b6;"></div>
<div class="r" style="left:10px;top:292px;width:24px;height:17px;background:#d2d2d2;"></div>
<div class="r" style="left:10px;top:309px;width:24px;height:1px;background:#b4b4b4;"></div>
<div class="t" style="left:18.6px;top:294.5px;font-size:13px;color:#217346;transform:scaleX(0.9500);">5</div>
<div class="r" style="left:149px;top:293px;width:1px;height:16px;background:#a8a8a8;"></div>
<div class="r" style="left:265px;top:293px;width:1px;height:16px;background:#a8a8a8;"></div>
<div class="r" style="left:357px;top:293px;width:1px;height:16px;background:#a8a8a8;"></div>
<div class="r" style="left:442px;top:293px;width:1px;height:16px;background:#a8a8a8;"></div>
<div class="r" style="left:533px;top:293px;width:1px;height:16px;background:#a8a8a8;"></div>
<div class="r" style="left:631px;top:293px;width:1px;height:16px;background:#a8a8a8;"></div>
<div class="t" style="left:37.0px;top:295.6px;font-size:12px;color:#000;transform:scaleX(1.0100);-webkit-text-stroke:0.2px #000;">Соки</div>
<div class="t" style="left:152.0px;top:295.6px;font-size:12px;color:#000;transform:scaleX(1.0100);-webkit-text-stroke:0.2px #000;">Добрый экзотик</div>
<div class="t" style="left:268.0px;top:295.6px;font-size:12px;color:#000;transform:scaleX(1.0100);-webkit-text-stroke:0.2px #000;">Евроопт</div>
<div class="t" style="left:418.8px;top:295.6px;font-size:12px;color:#000;transform:scaleX(1.0100);-webkit-text-stroke:0.2px #000;">449</div>
<div class="t" style="left:469.0px;top:295.6px;font-size:12px;color:#000;transform:scaleX(1.0100);-webkit-text-stroke:0.2px #000;">95FBV</div>
<div class="t" style="left:560.1px;top:295.6px;font-size:12px;color:#000;transform:scaleX(1.0100);-webkit-text-stroke:0.2px #000;">417 298</div>
<div class="t" style="left:634.0px;top:295.6px;font-size:12px;color:#000;transform:scaleX(1.0100);-webkit-text-stroke:0.2px #000;">Никитенко</div>
<div class="r" style="left:34px;top:309px;width:701px;height:17px;background:#adb7c3;"></div>
<div class="r" style="left:34px;top:309px;width:701px;height:1px;background:#7a98b6;"></div>
<div class="r" style="left:10px;top:309px;width:24px;height:17px;background:#d2d2d2;"></div>
<div class="r" style="left:10px;top:326px;width:24px;height:1px;background:#b4b4b4;"></div>
<div class="t" style="left:18.6px;top:311.5px;font-size:13px;color:#217346;transform:scaleX(0.9500);">6</div>
<div class="t" style="left:37.0px;top:312.6px;font-size:12px;color:#000;transform:scaleX(1.0100);-webkit-text-stroke:0.2px #000;">Соки</div>
<div class="t" style="left:152.0px;top:312.6px;font-size:12px;color:#000;transform:scaleX(1.0100);-webkit-text-stroke:0.2px #000;">Rich</div>
<div class="t" style="left:268.0px;top:312.6px;font-size:12px;color:#000;transform:scaleX(1.0100);-webkit-text-stroke:0.2px #000;">Евроопт</div>
<div class="t" style="left:418.8px;top:312.6px;font-size:12px;color:#000;transform:scaleX(1.0100);-webkit-text-stroke:0.2px #000;">902</div>
<div class="t" style="left:472.3px;top:312.6px;font-size:12px;color:#000;transform:scaleX(1.0100);-webkit-text-stroke:0.2px #000;">88NB</div>
<div class="t" style="left:560.1px;top:312.6px;font-size:12px;color:#000;transform:scaleX(1.0100);-webkit-text-stroke:0.2px #000;">296 770</div>
<div class="t" style="left:634.0px;top:312.6px;font-size:12px;color:#000;transform:scaleX(1.0100);-webkit-text-stroke:0.2px #000;">Силин</div>
<div class="r" style="left:34px;top:326px;width:701px;height:17px;background:#c8c8c8;"></div>
<div class="r" style="left:34px;top:326px;width:701px;height:1px;background:#7a98b6;"></div>
<div class="r" style="left:10px;top:326px;width:24px;height:17px;background:#d2d2d2;"></div>
<div class="r" style="left:10px;top:343px;width:24px;height:1px;background:#b4b4b4;"></div>
<div class="t" style="left:18.6px;top:328.5px;font-size:13px;color:#217346;transform:scaleX(0.9500);">7</div>
<div class="r" style="left:149px;top:327px;width:1px;height:16px;background:#a8a8a8;"></div>
<div class="r" style="left:265px;top:327px;width:1px;height:16px;background:#a8a8a8;"></div>
<div class="r" style="left:357px;top:327px;width:1px;height:16px;background:#a8a8a8;"></div>
<div class="r" style="left:442px;top:327px;width:1px;height:16px;background:#a8a8a8;"></div>
<div class="r" style="left:533px;top:327px;width:1px;height:16px;background:#a8a8a8;"></div>
<div class="r" style="left:631px;top:327px;width:1px;height:16px;background:#a8a8a8;"></div>
<div class="t" style="left:37.0px;top:329.6px;font-size:12px;color:#000;transform:scaleX(1.0100);-webkit-text-stroke:0.2px #000;">Газир.напитки</div>
<div class="t" style="left:152.0px;top:329.6px;font-size:12px;color:#000;transform:scaleX(1.0100);-webkit-text-stroke:0.2px #000;">Буратино</div>
<div class="t" style="left:268.0px;top:329.6px;font-size:12px;color:#000;transform:scaleX(1.0100);-webkit-text-stroke:0.2px #000;">Алми</div>
<div class="t" style="left:418.8px;top:329.6px;font-size:12px;color:#000;transform:scaleX(1.0100);-webkit-text-stroke:0.2px #000;">754</div>
<div class="t" style="left:471.3px;top:329.6px;font-size:12px;color:#000;transform:scaleX(1.0100);-webkit-text-stroke:0.2px #000;">54GG</div>
<div class="t" style="left:563.5px;top:329.6px;font-size:12px;color:#000;transform:scaleX(1.0100);-webkit-text-stroke:0.2px #000;">35 309</div>
<div class="t" style="left:634.0px;top:329.6px;font-size:12px;color:#000;transform:scaleX(1.0100);-webkit-text-stroke:0.2px #000;">Силин</div>
<div class="r" style="left:34px;top:343px;width:701px;height:17px;background:#adb7c3;"></div>
<div class="r" style="left:34px;top:343px;width:701px;height:1px;background:#7a98b6;"></div>
<div class="r" style="left:10px;top:343px;width:24px;height:17px;background:#d2d2d2;"></div>
<div class="r" style="left:10px;top:360px;width:24px;height:1px;background:#b4b4b4;"></div>
<div class="t" style="left:18.6px;top:345.5px;font-size:13px;color:#217346;transform:scaleX(0.9500);">8</div>
<div class="t" style="left:37.0px;top:346.6px;font-size:12px;color:#000;transform:scaleX(1.0100);-webkit-text-stroke:0.2px #000;">Соки</div>
<div class="t" style="left:152.0px;top:346.6px;font-size:12px;color:#000;transform:scaleX(1.0100);-webkit-text-stroke:0.2px #000;">Моя семья</div>
<div class="t" style="left:268.0px;top:346.6px;font-size:12px;color:#000;transform:scaleX(1.0100);-webkit-text-stroke:0.2px #000;">Простор</div>
<div class="t" style="left:418.8px;top:346.6px;font-size:12px;color:#000;transform:scaleX(1.0100);-webkit-text-stroke:0.2px #000;">887</div>
<div class="t" style="left:472.0px;top:346.6px;font-size:12px;color:#000;transform:scaleX(1.0100);-webkit-text-stroke:0.2px #000;">94KG</div>
<div class="t" style="left:560.1px;top:346.6px;font-size:12px;color:#000;transform:scaleX(1.0100);-webkit-text-stroke:0.2px #000;">681 741</div>
<div class="t" style="left:634.0px;top:346.6px;font-size:12px;color:#000;transform:scaleX(1.0100);-webkit-text-stroke:0.2px #000;">Игнатов</div>
<div class="r" style="left:34px;top:360px;width:701px;height:17px;background:#c8c8c8;"></div>
<div class="r" style="left:34px;top:360px;width:701px;height:1px;background:#7a98b6;"></div>
<div class="r" style="left:10px;top:360px;width:24px;height:17px;background:#d2d2d2;"></div>
<div class="r" style="left:10px;top:377px;width:24px;height:1px;background:#b4b4b4;"></div>
<div class="t" style="left:18.6px;top:362.5px;font-size:13px;color:#217346;transform:scaleX(0.9500);">9</div>
<div class="r" style="left:149px;top:361px;width:1px;height:16px;background:#a8a8a8;"></div>
<div class="r" style="left:265px;top:361px;width:1px;height:16px;background:#a8a8a8;"></div>
<div class="r" style="left:357px;top:361px;width:1px;height:16px;background:#a8a8a8;"></div>
<div class="r" style="left:442px;top:361px;width:1px;height:16px;background:#a8a8a8;"></div>
<div class="r" style="left:533px;top:361px;width:1px;height:16px;background:#a8a8a8;"></div>
<div class="r" style="left:631px;top:361px;width:1px;height:16px;background:#a8a8a8;"></div>
<div class="t" style="left:37.0px;top:363.6px;font-size:12px;color:#000;transform:scaleX(1.0100);-webkit-text-stroke:0.2px #000;">Газир.напитки</div>
<div class="t" style="left:152.0px;top:363.6px;font-size:12px;color:#000;transform:scaleX(1.0100);-webkit-text-stroke:0.2px #000;">Coca-Cola Light</div>
<div class="t" style="left:268.0px;top:363.6px;font-size:12px;color:#000;transform:scaleX(1.0100);-webkit-text-stroke:0.2px #000;">Корона</div>
<div class="t" style="left:418.8px;top:363.6px;font-size:12px;color:#000;transform:scaleX(1.0100);-webkit-text-stroke:0.2px #000;">466</div>
<div class="t" style="left:472.0px;top:363.6px;font-size:12px;color:#000;transform:scaleX(1.0100);-webkit-text-stroke:0.2px #000;">43CC</div>
<div class="t" style="left:560.1px;top:363.6px;font-size:12px;color:#000;transform:scaleX(1.0100);-webkit-text-stroke:0.2px #000;">665 789</div>
<div class="t" style="left:634.0px;top:363.6px;font-size:12px;color:#000;transform:scaleX(1.0100);-webkit-text-stroke:0.2px #000;">Силин</div>
<div class="r" style="left:34px;top:377px;width:701px;height:17px;background:#adb7c3;"></div>
<div class="r" style="left:34px;top:377px;width:701px;height:1px;background:#7a98b6;"></div>
<div class="r" style="left:10px;top:377px;width:24px;height:17px;background:#d2d2d2;"></div>
<div class="r" style="left:10px;top:394px;width:24px;height:1px;background:#b4b4b4;"></div>
<div class="t" style="left:15.1px;top:379.5px;font-size:13px;color:#217346;transform:scaleX(0.9500);">10</div>
<div class="t" style="left:37.0px;top:380.6px;font-size:12px;color:#000;transform:scaleX(1.0100);-webkit-text-stroke:0.2px #000;">Соки</div>
<div class="t" style="left:152.0px;top:380.6px;font-size:12px;color:#000;transform:scaleX(1.0100);-webkit-text-stroke:0.2px #000;">Моя семья</div>
<div class="t" style="left:268.0px;top:380.6px;font-size:12px;color:#000;transform:scaleX(1.0100);-webkit-text-stroke:0.2px #000;">Корона</div>
<div class="t" style="left:418.8px;top:380.6px;font-size:12px;color:#000;transform:scaleX(1.0100);-webkit-text-stroke:0.2px #000;">165</div>
<div class="t" style="left:472.7px;top:380.6px;font-size:12px;color:#000;transform:scaleX(1.0100);-webkit-text-stroke:0.2px #000;">54VV</div>
<div class="t" style="left:560.1px;top:380.6px;font-size:12px;color:#000;transform:scaleX(1.0100);-webkit-text-stroke:0.2px #000;">447 829</div>
<div class="t" style="left:634.0px;top:380.6px;font-size:12px;color:#000;transform:scaleX(1.0100);-webkit-text-stroke:0.2px #000;">Кузнецов</div>
<div class="r" style="left:34px;top:394px;width:701px;height:17px;background:#c8c8c8;"></div>
<div class="r" style="left:34px;top:394px;width:701px;height:1px;background:#7a98b6;"></div>
<div class="r" style="left:10px;top:394px;width:24px;height:17px;background:#d2d2d2;"></div>
<div class="r" style="left:10px;top:411px;width:24px;height:1px;background:#b4b4b4;"></div>
<div class="t" style="left:15.6px;top:396.5px;font-size:13px;color:#217346;transform:scaleX(0.9500);">11</div>
<div class="r" style="left:149px;top:395px;width:1px;height:16px;background:#a8a8a8;"></div>
<div class="r" style="left:265px;top:395px;width:1px;height:16px;background:#a8a8a8;"></div>
<div class="r" style="left:357px;top:395px;width:1px;height:16px;background:#a8a8a8;"></div>
<div class="r" style="left:442px;top:395px;width:1px;height:16px;background:#a8a8a8;"></div>
<div class="r" style="left:533px;top:395px;width:1px;height:16px;background:#a8a8a8;"></div>
<div class="r" style="left:631px;top:395px;width:1px;height:16px;background:#a8a8a8;"></div>
<div class="t" style="left:37.0px;top:397.6px;font-size:12px;color:#000;transform:scaleX(1.0100);-webkit-text-stroke:0.2px #000;">Соки</div>
<div class="t" style="left:152.0px;top:397.6px;font-size:12px;color:#000;transform:scaleX(1.0100);-webkit-text-stroke:0.2px #000;">Добрый виноград</div>
<div class="t" style="left:268.0px;top:397.6px;font-size:12px;color:#000;transform:scaleX(1.0100);-webkit-text-stroke:0.2px #000;">Гиппо</div>
<div class="t" style="left:418.8px;top:397.6px;font-size:12px;color:#000;transform:scaleX(1.0100);-webkit-text-stroke:0.2px #000;">752</div>
<div class="t" style="left:472.7px;top:397.6px;font-size:12px;color:#000;transform:scaleX(1.0100);-webkit-text-stroke:0.2px #000;">37BX</div>
<div class="t" style="left:560.1px;top:397.6px;font-size:12px;color:#000;transform:scaleX(1.0100);-webkit-text-stroke:0.2px #000;">266 494</div>
<div class="t" style="left:634.0px;top:397.6px;font-size:12px;color:#000;transform:scaleX(1.0100);-webkit-text-stroke:0.2px #000;">Иванов</div>
<div class="r" style="left:34px;top:411px;width:701px;height:17px;background:#adb7c3;"></div>
<div class="r" style="left:34px;top:411px;width:701px;height:1px;background:#7a98b6;"></div>
<div class="r" style="left:10px;top:411px;width:24px;height:17px;background:#d2d2d2;"></div>
<div class="r" style="left:10px;top:428px;width:24px;height:1px;background:#b4b4b4;"></div>
<div class="t" style="left:15.1px;top:413.5px;font-size:13px;color:#217346;transform:scaleX(0.9500);">12</div>
<div class="t" style="left:37.0px;top:414.6px;font-size:12px;color:#000;transform:scaleX(1.0100);-webkit-text-stroke:0.2px #000;">Вода и чай</div>
<div class="t" style="left:152.0px;top:414.6px;font-size:12px;color:#000;transform:scaleX(1.0100);-webkit-text-stroke:0.2px #000;">BonAqua</div>
<div class="t" style="left:268.0px;top:414.6px;font-size:12px;color:#000;transform:scaleX(1.0100);-webkit-text-stroke:0.2px #000;">Алми</div>
<div class="t" style="left:418.8px;top:414.6px;font-size:12px;color:#000;transform:scaleX(1.0100);-webkit-text-stroke:0.2px #000;">561</div>
<div class="t" style="left:472.3px;top:414.6px;font-size:12px;color:#000;transform:scaleX(1.0100);-webkit-text-stroke:0.2px #000;">94CX</div>
<div class="t" style="left:560.1px;top:414.6px;font-size:12px;color:#000;transform:scaleX(1.0100);-webkit-text-stroke:0.2px #000;">447 332</div>
<div class="t" style="left:634.0px;top:414.6px;font-size:12px;color:#000;transform:scaleX(1.0100);-webkit-text-stroke:0.2px #000;">Никитенко</div>
<div class="r" style="left:34px;top:428px;width:701px;height:17px;background:#c8c8c8;"></div>
<div class="r" style="left:34px;top:428px;width:701px;height:1px;background:#7a98b6;"></div>
<div class="r" style="left:10px;top:428px;width:24px;height:17px;background:#d2d2d2;"></div>
<div class="r" style="left:10px;top:445px;width:24px;height:1px;background:#b4b4b4;"></div>
<div class="t" style="left:15.1px;top:430.5px;font-size:13px;color:#217346;transform:scaleX(0.9500);">13</div>
<div class="r" style="left:149px;top:429px;width:1px;height:16px;background:#a8a8a8;"></div>
<div class="r" style="left:265px;top:429px;width:1px;height:16px;background:#a8a8a8;"></div>
<div class="r" style="left:357px;top:429px;width:1px;height:16px;background:#a8a8a8;"></div>
<div class="r" style="left:442px;top:429px;width:1px;height:16px;background:#a8a8a8;"></div>
<div class="r" style="left:533px;top:429px;width:1px;height:16px;background:#a8a8a8;"></div>
<div class="r" style="left:631px;top:429px;width:1px;height:16px;background:#a8a8a8;"></div>
<div class="t" style="left:37.0px;top:431.6px;font-size:12px;color:#000;transform:scaleX(1.0100);-webkit-text-stroke:0.2px #000;">Газир.напитки</div>
<div class="t" style="left:152.0px;top:431.6px;font-size:12px;color:#000;transform:scaleX(1.0100);-webkit-text-stroke:0.2px #000;">Sprite</div>
<div class="t" style="left:268.0px;top:431.6px;font-size:12px;color:#000;transform:scaleX(1.0100);-webkit-text-stroke:0.2px #000;">Алми</div>
<div class="t" style="left:418.8px;top:431.6px;font-size:12px;color:#000;transform:scaleX(1.0100);-webkit-text-stroke:0.2px #000;">870</div>
<div class="t" style="left:472.3px;top:431.6px;font-size:12px;color:#000;transform:scaleX(1.0100);-webkit-text-stroke:0.2px #000;">76ER</div>
<div class="t" style="left:560.1px;top:431.6px;font-size:12px;color:#000;transform:scaleX(1.0100);-webkit-text-stroke:0.2px #000;">260 584</div>
<div class="t" style="left:634.0px;top:431.6px;font-size:12px;color:#000;transform:scaleX(1.0100);-webkit-text-stroke:0.2px #000;">Казаков</div>
<div class="r" style="left:34px;top:445px;width:701px;height:17px;background:#adb7c3;"></div>
<div class="r" style="left:34px;top:445px;width:701px;height:1px;background:#7a98b6;"></div>
<div class="r" style="left:10px;top:445px;width:24px;height:17px;background:#d2d2d2;"></div>
<div class="r" style="left:10px;top:462px;width:24px;height:1px;background:#b4b4b4;"></div>
<div class="t" style="left:15.1px;top:447.5px;font-size:13px;color:#217346;transform:scaleX(0.9500);">14</div>
<div class="t" style="left:37.0px;top:448.6px;font-size:12px;color:#000;transform:scaleX(1.0100);-webkit-text-stroke:0.2px #000;">Соки</div>
<div class="t" style="left:152.0px;top:448.6px;font-size:12px;color:#000;transform:scaleX(1.0100);-webkit-text-stroke:0.2px #000;">Моя семья</div>
<div class="t" style="left:268.0px;top:448.6px;font-size:12px;color:#000;transform:scaleX(1.0100);-webkit-text-stroke:0.2px #000;">Евроопт</div>
<div class="t" style="left:418.8px;top:448.6px;font-size:12px;color:#000;transform:scaleX(1.0100);-webkit-text-stroke:0.2px #000;">902</div>
<div class="t" style="left:473.0px;top:448.6px;font-size:12px;color:#000;transform:scaleX(1.0100);-webkit-text-stroke:0.2px #000;">45ZX</div>
<div class="t" style="left:560.1px;top:448.6px;font-size:12px;color:#000;transform:scaleX(1.0100);-webkit-text-stroke:0.2px #000;">381 237</div>
<div class="t" style="left:634.0px;top:448.6px;font-size:12px;color:#000;transform:scaleX(1.0100);-webkit-text-stroke:0.2px #000;">Силин</div>
<div class="r" style="left:34px;top:462px;width:701px;height:17px;background:#c8c8c8;"></div>
<div class="r" style="left:34px;top:462px;width:701px;height:1px;background:#7a98b6;"></div>
<div class="r" style="left:10px;top:462px;width:24px;height:17px;background:#d2d2d2;"></div>
<div class="r" style="left:10px;top:479px;width:24px;height:1px;background:#b4b4b4;"></div>
<div class="t" style="left:15.1px;top:464.5px;font-size:13px;color:#217346;transform:scaleX(0.9500);">15</div>
<div class="r" style="left:149px;top:463px;width:1px;height:16px;background:#a8a8a8;"></div>
<div class="r" style="left:265px;top:463px;width:1px;height:16px;background:#a8a8a8;"></div>
<div class="r" style="left:357px;top:463px;width:1px;height:16px;background:#a8a8a8;"></div>
<div class="r" style="left:442px;top:463px;width:1px;height:16px;background:#a8a8a8;"></div>
<div class="r" style="left:533px;top:463px;width:1px;height:16px;background:#a8a8a8;"></div>
<div class="r" style="left:631px;top:463px;width:1px;height:16px;background:#a8a8a8;"></div>
<div class="t" style="left:37.0px;top:465.6px;font-size:12px;color:#000;transform:scaleX(1.0100);-webkit-text-stroke:0.2px #000;">Газир.напитки</div>
<div class="t" style="left:152.0px;top:465.6px;font-size:12px;color:#000;transform:scaleX(1.0100);-webkit-text-stroke:0.2px #000;">Fanta</div>
<div class="t" style="left:268.0px;top:465.6px;font-size:12px;color:#000;transform:scaleX(1.0100);-webkit-text-stroke:0.2px #000;">Перекресток</div>
<div class="t" style="left:418.8px;top:465.6px;font-size:12px;color:#000;transform:scaleX(1.0100);-webkit-text-stroke:0.2px #000;">128</div>
<div class="t" style="left:472.3px;top:465.6px;font-size:12px;color:#000;transform:scaleX(1.0100);-webkit-text-stroke:0.2px #000;">12CX</div>
<div class="t" style="left:560.1px;top:465.6px;font-size:12px;color:#000;transform:scaleX(1.0100);-webkit-text-stroke:0.2px #000;">529 452</div>
<div class="t" style="left:634.0px;top:465.6px;font-size:12px;color:#000;transform:scaleX(1.0100);-webkit-text-stroke:0.2px #000;">Никитенко</div>
<div class="r" style="left:34px;top:479px;width:701px;height:17px;background:#adb7c3;"></div>
<div class="r" style="left:34px;top:479px;width:701px;height:1px;background:#7a98b6;"></div>
<div class="r" style="left:10px;top:479px;width:24px;height:17px;background:#d2d2d2;"></div>
<div class="r" style="left:10px;top:496px;width:24px;height:1px;background:#b4b4b4;"></div>
<div class="t" style="left:15.1px;top:481.5px;font-size:13px;color:#217346;transform:scaleX(0.9500);">16</div>
<div class="t" style="left:37.0px;top:482.6px;font-size:12px;color:#000;transform:scaleX(1.0100);-webkit-text-stroke:0.2px #000;">Газир.напитки</div>
<div class="t" style="left:152.0px;top:482.6px;font-size:12px;color:#000;transform:scaleX(1.0100);-webkit-text-stroke:0.2px #000;">Sprite</div>
<div class="t" style="left:268.0px;top:482.6px;font-size:12px;color:#000;transform:scaleX(1.0100);-webkit-text-stroke:0.2px #000;">Евроопт</div>
<div class="t" style="left:418.8px;top:482.6px;font-size:12px;color:#000;transform:scaleX(1.0100);-webkit-text-stroke:0.2px #000;">594</div>
<div class="t" style="left:473.0px;top:482.6px;font-size:12px;color:#000;transform:scaleX(1.0100);-webkit-text-stroke:0.2px #000;">85ZA</div>
<div class="t" style="left:560.1px;top:482.6px;font-size:12px;color:#000;transform:scaleX(1.0100);-webkit-text-stroke:0.2px #000;">774 535</div>
<div class="t" style="left:634.0px;top:482.6px;font-size:12px;color:#000;transform:scaleX(1.0100);-webkit-text-stroke:0.2px #000;">Силин</div>
<div class="r" style="left:34px;top:496px;width:701px;height:17px;background:#c8c8c8;"></div>
<div class="r" style="left:34px;top:496px;width:701px;height:1px;background:#7a98b6;"></div>
<div class="r" style="left:10px;top:496px;width:24px;height:17px;background:#d2d2d2;"></div>
<div class="r" style="left:10px;top:513px;width:24px;height:1px;background:#b4b4b4;"></div>
<div class="t" style="left:15.1px;top:498.5px;font-size:13px;color:#217346;transform:scaleX(0.9500);">17</div>
<div class="r" style="left:149px;top:497px;width:1px;height:16px;background:#a8a8a8;"></div>
<div class="r" style="left:265px;top:497px;width:1px;height:16px;background:#a8a8a8;"></div>
<div class="r" style="left:357px;top:497px;width:1px;height:16px;background:#a8a8a8;"></div>
<div class="r" style="left:442px;top:497px;width:1px;height:16px;background:#a8a8a8;"></div>
<div class="r" style="left:533px;top:497px;width:1px;height:16px;background:#a8a8a8;"></div>
<div class="r" style="left:631px;top:497px;width:1px;height:16px;background:#a8a8a8;"></div>
<div class="t" style="left:37.0px;top:499.6px;font-size:12px;color:#000;transform:scaleX(1.0100);-webkit-text-stroke:0.2px #000;">Газир.напитки</div>
<div class="t" style="left:152.0px;top:499.6px;font-size:12px;color:#000;transform:scaleX(1.0100);-webkit-text-stroke:0.2px #000;">Coca-Cola Light</div>
<div class="t" style="left:268.0px;top:499.6px;font-size:12px;color:#000;transform:scaleX(1.0100);-webkit-text-stroke:0.2px #000;">Корона</div>
<div class="t" style="left:418.8px;top:499.6px;font-size:12px;color:#000;transform:scaleX(1.0100);-webkit-text-stroke:0.2px #000;">201</div>
<div class="t" style="left:473.4px;top:499.6px;font-size:12px;color:#000;transform:scaleX(1.0100);-webkit-text-stroke:0.2px #000;">77ZZ</div>
<div class="t" style="left:560.1px;top:499.6px;font-size:12px;color:#000;transform:scaleX(1.0100);-webkit-text-stroke:0.2px #000;">530 521</div>
<div class="t" style="left:634.0px;top:499.6px;font-size:12px;color:#000;transform:scaleX(1.0100);-webkit-text-stroke:0.2px #000;">Иванов</div>
<div class="r" style="left:799px;top:200px;width:1px;height:315px;background:#d9d9d9;"></div>
<div class="r" style="left:863px;top:200px;width:1px;height:315px;background:#d9d9d9;"></div>
<div class="r" style="left:928px;top:200px;width:1px;height:315px;background:#d9d9d9;"></div>
<div class="r" style="left:992px;top:200px;width:1px;height:315px;background:#d9d9d9;"></div>
<div class="r" style="left:1055px;top:200px;width:1px;height:315px;background:#d9d9d9;"></div>
<div class="r" style="left:1119px;top:200px;width:1px;height:315px;background:#d9d9d9;"></div>
<div class="r" style="left:1183px;top:200px;width:1px;height:315px;background:#d9d9d9;"></div>
<div class="r" style="left:1247px;top:200px;width:1px;height:315px;background:#d9d9d9;"></div>
<div class="r" style="left:1311px;top:200px;width:1px;height:315px;background:#d9d9d9;"></div>
<div class="r" style="left:735px;top:241px;width:516px;height:1px;background:#d9d9d9;"></div>
<div class="r" style="left:735px;top:258px;width:516px;height:1px;background:#d9d9d9;"></div>
<div class="r" style="left:735px;top:275px;width:516px;height:1px;background:#d9d9d9;"></div>
<div class="r" style="left:735px;top:292px;width:516px;height:1px;background:#d9d9d9;"></div>
<div class="r" style="left:735px;top:309px;width:516px;height:1px;background:#d9d9d9;"></div>
<div class="r" style="left:735px;top:326px;width:516px;height:1px;background:#d9d9d9;"></div>
<div class="r" style="left:735px;top:343px;width:516px;height:1px;background:#d9d9d9;"></div>
<div class="r" style="left:735px;top:360px;width:516px;height:1px;background:#d9d9d9;"></div>
<div class="r" style="left:735px;top:377px;width:516px;height:1px;background:#d9d9d9;"></div>
<div class="r" style="left:735px;top:394px;width:516px;height:1px;background:#d9d9d9;"></div>
<div class="r" style="left:735px;top:411px;width:516px;height:1px;background:#d9d9d9;"></div>
<div class="r" style="left:735px;top:428px;width:516px;height:1px;background:#d9d9d9;"></div>
<div class="r" style="left:735px;top:445px;width:516px;height:1px;background:#d9d9d9;"></div>
<div class="r" style="left:735px;top:462px;width:516px;height:1px;background:#d9d9d9;"></div>
<div class="r" style="left:735px;top:479px;width:516px;height:1px;background:#d9d9d9;"></div>
<div class="r" style="left:735px;top:496px;width:516px;height:1px;background:#d9d9d9;"></div>
<div class="r" style="left:735px;top:513px;width:516px;height:1px;background:#d9d9d9;"></div>
<div class="r" style="left:33px;top:240px;width:704px;height:275px;border:2px solid #217346;box-shadow:inset 0 0 0 1px #fff;"></div>
<div class="r" style="left:734px;top:511px;width:5px;height:5px;background:#217346;"></div>
<div class="r" style="left:655px;top:118px;width:346px;height:298px;background:#fff;border:1px solid #c8c8c8;box-shadow:2px 2px 3px rgba(0,0,0,0.22);"></div>
<div class="r" style="left:656px;top:119px;width:344px;height:44px;background:#c6c6c6;"></div>
<svg class="r" style="left:665px;top:127px;" width="32" height="32" viewBox="0 0 32 32"><rect x="0" y="0" width="28" height="25" fill="#fff"/><rect x="8" y="6" width="13" height="7" fill="#dcc796"/><rect x="0.5" y="0.5" width="27" height="24" fill="none" stroke="#7f7f7f"/><path d="M7.5 0v25M20.5 0v25M0 5.5h28M0 12.5h28M0 18.5h28" stroke="#a6a6a6"/><rect x="14.5" y="16.5" width="15" height="13" fill="#fff" stroke="#6a6a6a"/><path d="M21 18.5l-3.5 2 3.5 2M17.5 24.5h4M17.5 26.5h4M23 22.5l3.5 2.5-3.5 2.5" stroke="#333" fill="none"/></svg>
<svg class="r" style="left:665px;top:171px;" width="32" height="32" viewBox="0 0 32 32"><rect x="0" y="0" width="28" height="25" fill="#fff"/><rect x="8" y="1" width="13" height="17" fill="#dcc796"/><rect x="0.5" y="0.5" width="27" height="24" fill="none" stroke="#7f7f7f"/><path d="M7.5 0v25M20.5 0v25M0 6.5h28M0 12.5h28M0 18.5h28" stroke="#a6a6a6"/><path d="M14.5 15V4M11 7.5l3.5-3.5L18 7.5" stroke="#555" stroke-width="1.3" fill="none"/><rect x="14.5" y="17.5" width="16" height="12" fill="#fff" stroke="#6a6a6a"/><text x="22.5" y="27.5" text-anchor="middle" font-size="10" font-family="Liberation Sans" fill="#333">10</text></svg>
<svg class="r" style="left:665px;top:218px;" width="30" height="28" viewBox="0 0 30 28"><rect x="0.5" y="0.5" width="27" height="25" fill="#fff" stroke="#7f7f7f"/><rect x="8" y="1" width="9" height="4" fill="#3c7ec2"/><rect x="8" y="6" width="3" height="4" fill="#3c7ec2"/><rect x="8" y="11" width="11" height="4" fill="#3c7ec2"/><rect x="8" y="16" width="7" height="4" fill="#3c7ec2"/><rect x="8" y="21" width="5" height="4" fill="#3c7ec2"/><path d="M16 3h3M14 8h3M16 13h3M16 18h3M16 23h3" stroke="#444"/><path d="M7.5 0v26M20.5 0v26M0 5.5h28M0 10.5h28M0 15.5h28M0 20.5h28" stroke="#a6a6a6"/></svg>
<svg class="r" style="left:665px;top:262px;" width="30" height="28" viewBox="0 0 30 28"><rect x="0.5" y="0.5" width="27" height="25" fill="#fff" stroke="#7f7f7f"/><rect x="8" y="1" width="12" height="4" fill="#3c7ec2"/><rect x="8" y="6" width="12" height="4" fill="#a9c3dd"/><rect x="8" y="11" width="12" height="4" fill="#dcc796"/><rect x="8" y="16" width="12" height="4" fill="#f4801f"/><rect x="8" y="21" width="12" height="4" fill="#f4801f"/><path d="M14 3h5M14 8h5M14 13h5M14 18h5M14 23h5" stroke="#333"/><path d="M7.5 0v26M20.5 0v26M0 5.5h28M0 10.5h28M0 15.5h28M0 20.5h28" stroke="#a6a6a6"/></svg>
<svg class="r" style="left:665px;top:306px;" width="30" height="28" viewBox="0 0 30 28"><rect x="0.5" y="0.5" width="27" height="25" fill="#fff" stroke="#7f7f7f"/><circle cx="11" cy="3" r="1.4" fill="#3c7ec2"/><circle cx="11" cy="8" r="1.4" fill="#f4801f"/><circle cx="11" cy="13" r="1.4" fill="#3c7ec2"/><circle cx="11" cy="18" r="1.4" fill="#f4801f"/><circle cx="11" cy="23" r="1.4" fill="#3c7ec2"/><path d="M14 3h5M14 8h5M14 13h5M14 18h5M14 23h5" stroke="#555"/><path d="M7.5 0v26M20.5 0v26M0 5.5h28M0 10.5h28M0 15.5h28M0 20.5h28" stroke="#a6a6a6"/></svg>
<div class="t" style="left:702.5px;top:137.9px;font-size:12px;color:#1a1a1a;font-weight:bold;transform:scaleX(0.9884);">Правила выделения ячеек</div>
<div class="t" style="left:702.5px;top:182.1px;font-size:12px;color:#4a4a4a;font-weight:bold;transform:scaleX(0.9741);">Правила отбора первых и последних значений</div>
<div class="t" style="left:702.5px;top:228.1px;font-size:12px;color:#4a4a4a;font-weight:bold;transform:scaleX(0.9553);">Гистограммы</div>
<div class="t" style="left:702.5px;top:272.1px;font-size:12px;color:#4a4a4a;font-weight:bold;transform:scaleX(0.9833);">Цветовые шкалы</div>
<div class="t" style="left:702.5px;top:315.6px;font-size:12px;color:#4a4a4a;font-weight:bold;transform:scaleX(0.9684);">Наборы значков</div>
<div class="r" style="left:703px;top:148px;width:9px;height:1px;background:#1a1a1a;"></div>
<div class="r" style="left:703px;top:192px;width:9px;height:1px;background:#4a4a4a;"></div>
<div class="r" style="left:703px;top:238px;width:7px;height:1px;background:#4a4a4a;"></div>
<div class="r" style="left:765px;top:282px;width:10px;height:1px;background:#4a4a4a;"></div>
<div class="r" style="left:703px;top:326px;width:9px;height:1px;background:#4a4a4a;"></div>
<div class="r" style="left:702px;top:207px;width:298px;height:1px;background:#e3e3e3;"></div>
<div class="r" style="left:656px;top:341px;width:344px;height:1px;background:#e0e0e0;"></div>
<svg class="r" style="left:987px;top:136px;" width="5" height="9" viewBox="0 0 5 9"><path d="M0 0l4.5 4.5L0 9z" fill="#777"/></svg>
<svg class="r" style="left:987px;top:180px;" width="5" height="9" viewBox="0 0 5 9"><path d="M0 0l4.5 4.5L0 9z" fill="#777"/></svg>
<svg class="r" style="left:987px;top:226px;" width="5" height="9" viewBox="0 0 5 9"><path d="M0 0l4.5 4.5L0 9z" fill="#777"/></svg>
<svg class="r" style="left:987px;top:270px;" width="5" height="9" viewBox="0 0 5 9"><path d="M0 0l4.5 4.5L0 9z" fill="#777"/></svg>
<svg class="r" style="left:987px;top:314px;" width="5" height="9" viewBox="0 0 5 9"><path d="M0 0l4.5 4.5L0 9z" fill="#777"/></svg>
<svg class="r" style="left:987px;top:374px;" width="5" height="9" viewBox="0 0 5 9"><path d="M0 0l4.5 4.5L0 9z" fill="#777"/></svg>
<svg class="r" style="left:662px;top:348px;" width="14" height="13" viewBox="0 0 14 13"><rect x="0.5" y="0.5" width="12" height="12" fill="#fff" stroke="#595959"/><path d="M0 3.5h13M0 9.5h13M3.5 0v13M9.5 0v13" stroke="#c4c4c4"/><rect x="4" y="4" width="5" height="5" fill="#dcc796"/></svg>
<svg class="r" style="left:662px;top:372px;" width="16" height="16" viewBox="0 0 16 16"><rect x="0.5" y="0.5" width="12" height="12" fill="#fff" stroke="#595959"/><path d="M0 3.5h13M3.5 0v13" stroke="#c4c4c4"/><rect x="4" y="4" width="5" height="5" fill="#dcc796"/><path d="M6 14l3 2 6-6-3-3z" fill="#e3a86a"/></svg>
<svg class="r" style="left:661px;top:395px;" width="16" height="16" viewBox="0 0 16 16"><path d="M0.5 14V0.5H12" stroke="#595959" fill="none"/><rect x="2.5" y="2.5" width="12" height="12" fill="#fff" stroke="#595959"/><path d="M2 5.5h13M2 11.5h13M5.5 2v13M11.5 2v13" stroke="#c4c4c4"/><rect x="6" y="6" width="5" height="5" fill="#dcc796"/></svg>
<div class="t" style="left:689.5px;top:348.6px;font-size:12px;color:#444;transform:scaleX(0.9558);">Создать правило...</div>
<div class="t" style="left:689.5px;top:373.1px;font-size:12px;color:#444;transform:scaleX(0.9609);">Удалить правила</div>
<div class="t" style="left:689.5px;top:396.6px;font-size:12px;color:#444;transform:scaleX(0.9817);">Управление правилами...</div>
<div class="r" style="left:690px;top:360px;width:8px;height:1px;background:#444;"></div>
<div class="r" style="left:690px;top:385px;width:8px;height:1px;background:#444;"></div>
<div class="r" style="left:742px;top:408px;width:7px;height:1px;background:#444;"></div>
<div class="r" style="left:1001px;top:118px;width:237px;height:339px;background:#fff;border:1px solid #c8c8c8;box-shadow:2px 2px 3px rgba(0,0,0,0.22);"></div>
<div class="r" style="left:1002px;top:385px;width:235px;height:43px;background:#c6c6c6;"></div>
<div class="t" style="left:1048.3px;top:139.8px;font-size:12px;color:#4a4a4a;font-weight:bold;transform:scaleX(0.9593);">Больше...</div>
<div class="r" style="left:1048px;top:151px;width:8px;height:1px;background:#4a4a4a;"></div>
<svg class="r" style="left:1011px;top:130px;" width="32" height="32" viewBox="0 0 32 32"><rect x="0" y="0" width="28" height="24" fill="#fff"/><rect x="8" y="7" width="12" height="5" fill="#dcc796"/><rect x="0.5" y="0.5" width="27" height="23" fill="none" stroke="#7f7f7f"/><path d="M7.5 0v24M20.5 0v24M0 6.5h28M0 12.5h28M0 18.5h28" stroke="#a6a6a6"/><rect x="14.5" y="16.5" width="16" height="12" fill="#fff" stroke="#6a6a6a"/><path d="M20 19l5 3.5-5 3.5" stroke="#333" stroke-width="1.2" fill="none"/></svg>
<div class="t" style="left:1048.3px;top:183.8px;font-size:12px;color:#4a4a4a;font-weight:bold;transform:scaleX(0.9919);">Меньше...</div>
<div class="r" style="left:1079px;top:195px;width:10px;height:1px;background:#4a4a4a;"></div>
<svg class="r" style="left:1011px;top:174px;" width="32" height="32" viewBox="0 0 32 32"><rect x="0" y="0" width="28" height="24" fill="#fff"/><rect x="8" y="7" width="12" height="5" fill="#dcc796"/><rect x="0.5" y="0.5" width="27" height="23" fill="none" stroke="#7f7f7f"/><path d="M7.5 0v24M20.5 0v24M0 6.5h28M0 12.5h28M0 18.5h28" stroke="#a6a6a6"/><rect x="14.5" y="16.5" width="16" height="12" fill="#fff" stroke="#6a6a6a"/><path d="M25 19l-5 3.5 5 3.5" stroke="#333" stroke-width="1.2" fill="none"/></svg>
<div class="t" style="left:1048.3px;top:227.8px;font-size:12px;color:#4a4a4a;font-weight:bold;transform:scaleX(1.0330);">Между...</div>
<div class="r" style="left:1048px;top:239px;width:10px;height:1px;background:#4a4a4a;"></div>
<svg class="r" style="left:1011px;top:218px;" width="32" height="32" viewBox="0 0 32 32"><rect x="0" y="0" width="28" height="24" fill="#fff"/><rect x="1" y="7" width="6" height="5" fill="#3c7ec2"/><rect x="21" y="7" width="6" height="5" fill="#3c7ec2"/><rect x="8" y="13" width="12" height="5" fill="#dcc796"/><rect x="0.5" y="0.5" width="27" height="23" fill="none" stroke="#7f7f7f"/><path d="M7.5 0v24M20.5 0v24M0 6.5h28M0 12.5h28M0 18.5h28" stroke="#a6a6a6"/></svg>
<div class="t" style="left:1048.3px;top:271.8px;font-size:12px;color:#4a4a4a;font-weight:bold;transform:scaleX(0.9252);">Равно...</div>
<div class="r" style="left:1048px;top:283px;width:7px;height:1px;background:#4a4a4a;"></div>
<svg class="r" style="left:1011px;top:262px;" width="32" height="32" viewBox="0 0 32 32"><rect x="0" y="0" width="28" height="24" fill="#fff"/><rect x="8" y="7" width="12" height="5" fill="#dcc796"/><rect x="0.5" y="0.5" width="27" height="23" fill="none" stroke="#7f7f7f"/><path d="M7.5 0v24M20.5 0v24M0 6.5h28M0 12.5h28M0 18.5h28" stroke="#a6a6a6"/><rect x="14.5" y="16.5" width="16" height="12" fill="#fff" stroke="#6a6a6a"/><path d="M19 21h7M19 24h7" stroke="#333" stroke-width="1.1"/></svg>
<div class="t" style="left:1048.3px;top:315.8px;font-size:12px;color:#4a4a4a;font-weight:bold;transform:scaleX(0.9886);">Текст содержит...</div>
<div class="r" style="left:1048px;top:327px;width:7px;height:1px;background:#4a4a4a;"></div>
<svg class="r" style="left:1011px;top:306px;" width="32" height="32" viewBox="0 0 32 32"><rect x="0" y="0" width="28" height="24" fill="#fff"/><rect x="8" y="7" width="19" height="5" fill="#dcc796"/><rect x="0.5" y="0.5" width="27" height="23" fill="none" stroke="#7f7f7f"/><path d="M7.5 0v24M20.5 0v24M0 6.5h28M0 12.5h28M0 18.5h28" stroke="#a6a6a6"/><rect x="14.5" y="16.5" width="16" height="12" fill="#fff" stroke="#6a6a6a"/><text x="16.5" y="27" font-size="11" font-family="Liberation Serif" fill="#333">ab</text></svg>
<div class="t" style="left:1048.3px;top:359.8px;font-size:12px;color:#4a4a4a;font-weight:bold;transform:scaleX(0.9266);">Дата...</div>
<div class="r" style="left:1048px;top:371px;width:8px;height:1px;background:#4a4a4a;"></div>
<svg class="r" style="left:1011px;top:350px;" width="32" height="32" viewBox="0 0 32 32"><rect x="0" y="0" width="28" height="24" fill="#fff"/><rect x="6" y="13" width="14" height="5" fill="#dcc796"/><rect x="0.5" y="0.5" width="27" height="23" fill="none" stroke="#7f7f7f"/><path d="M7.5 0v24M20.5 0v24M0 6.5h28M0 12.5h28M0 18.5h28" stroke="#a6a6a6"/><rect x="14.5" y="16.5" width="16" height="13" fill="#fff" stroke="#6a6a6a"/><rect x="14" y="16" width="17" height="2.5" fill="#6a6a6a"/><path d="M14 21.5h17M14 25.5h17M18.5 18v12M22.5 18v12M26.5 18v12" stroke="#bbb"/><rect x="23.5" y="22.5" width="3.5" height="3.5" fill="#fff" stroke="#f4801f" stroke-width="1.2"/></svg>
<div class="t" style="left:1048.3px;top:403.8px;font-size:12px;color:#1a1a1a;font-weight:bold;transform:scaleX(0.9938);">Повторяющиеся значения...</div>
<div class="r" style="left:1048px;top:415px;width:9px;height:1px;background:#1a1a1a;"></div>
<svg class="r" style="left:1011px;top:394px;" width="32" height="32" viewBox="0 0 32 32"><rect x="0" y="0" width="28" height="24" fill="#fff"/><rect x="8" y="1" width="12" height="5" fill="#dcc796"/><rect x="8" y="19" width="12" height="5" fill="#dcc796"/><rect x="0.5" y="0.5" width="27" height="23" fill="none" stroke="#7f7f7f"/><path d="M7.5 0v24M20.5 0v24M0 6.5h28M0 12.5h28M0 18.5h28" stroke="#a6a6a6"/><path d="M10 3.5h8M10 9.5h8M10 15.5h8M10 21.5h8" stroke="#aaa"/></svg>
<div class="t" style="left:1035.0px;top:436.6px;font-size:12px;color:#444;transform:scaleX(0.9863);">Другие правила...</div>
<div class="r" style="left:1055px;top:449px;width:4px;height:1px;background:#444;"></div>
</div></div>
<svg class="r" style="left:1070px;top:470px;" width="60" height="50" viewBox="0 0 60 50"><rect x="9.4" y="21.2" width="4.6" height="16.0" rx="2.5" fill="#94b888"/><rect x="18.0" y="14.3" width="4.8" height="25.1" rx="2.5" fill="#d6d6d6"/><rect x="26.2" y="22.7" width="5.0" height="12.2" rx="2.5" fill="#94b888"/><rect x="34.2" y="6.0" width="5.1" height="31.2" rx="2.5" fill="#a8a8a8"/><rect x="43.0" y="21.2" width="5.0" height="23.6" rx="2.5" fill="#94b888"/><rect x="51.0" y="18.0" width="5.0" height="19.2" rx="2.5" fill="#a8a8a8"/></svg>
<div class="t" style="left:1131.0px;top:483.8px;font-size:24px;color:#94b888;font-weight:bold;transform:scaleX(0.7704);-webkit-text-stroke:0.6px #94b888;opacity:0.85;">Mister-Office</div>
<svg class="r" style="left:0;top:0" width="1262" height="526" viewBox="0 0 1262 526"><defs><filter id="sh" x="-10%" y="-10%" width="120%" height="120%"><feGaussianBlur stdDeviation="2"/></filter></defs><g transform="translate(1.5,2)" filter="url(#sh)" opacity="0.9"><path d="M751 82L789.1 119.0" stroke="#4a4a4a" stroke-width="7.5" stroke-linecap="round"/><polygon points="805,133 780,121.5 789.1,119.0 792.5,111.5" fill="#4a4a4a" stroke="#4a4a4a" stroke-width="3" stroke-linejoin="round"/><path d="M976 147L1056.7 380.6" stroke="#4a4a4a" stroke-width="7" stroke-linecap="round"/><polygon points="1063.5,399.5 1049,380 1056.7,380.6 1062,374.5" fill="#4a4a4a" stroke="#4a4a4a" stroke-width="3" stroke-linejoin="round"/><path d="M1011 427.4L736.6 446.2" stroke="#4a4a4a" stroke-width="7" stroke-linecap="round"/><polygon points="714.3,447.6 740.5,439 736.6,446.2 740.5,452.8" fill="#4a4a4a" stroke="#4a4a4a" stroke-width="3" stroke-linejoin="round"/></g><path d="M751 82L789.1 119.0" stroke="#f7861c" stroke-width="4.5" stroke-linecap="round"/><polygon points="805,133 780,121.5 789.1,119.0 792.5,111.5" fill="#f7861c"/><path d="M976 147L1056.7 380.6" stroke="#f7861c" stroke-width="4" stroke-linecap="round"/><polygon points="1063.5,399.5 1049,380 1056.7,380.6 1062,374.5" fill="#f7861c"/><path d="M1011 427.4L736.6 446.2" stroke="#f7861c" stroke-width="4" stroke-linecap="round"/><polygon points="714.3,447.6 740.5,439 736.6,446.2 740.5,452.8" fill="#f7861c"/></svg>
<svg class="r" style="left:731.8px;top:46.9px" width="30" height="30" viewBox="0 0 30 30"><defs><filter id="b1" x="-50%" y="-50%" width="200%" height="200%"><feGaussianBlur stdDeviation="1.8"/></filter></defs><circle cx="14.8" cy="15" r="10" fill="#444" opacity="0.75" filter="url(#b1)"/><circle cx="14" cy="14" r="8.4" fill="#179c2b" stroke="#fff" stroke-width="1.8"/><text x="14" y="18" text-anchor="middle" font-family="Liberation Serif" font-weight="bold" font-size="12" fill="#fff">1</text></svg>
<svg class="r" style="left:931px;top:129.7px" width="30" height="30" viewBox="0 0 30 30"><defs><filter id="b2" x="-50%" y="-50%" width="200%" height="200%"><feGaussianBlur stdDeviation="1.8"/></filter></defs><circle cx="14.8" cy="15" r="10" fill="#444" opacity="0.75" filter="url(#b2)"/><circle cx="14" cy="14" r="8.4" fill="#179c2b" stroke="#fff" stroke-width="1.8"/><text x="14" y="18" text-anchor="middle" font-family="Liberation Serif" font-weight="bold" font-size="12" fill="#fff">2</text></svg>
<svg class="r" style="left:1182.5px;top:371px" width="30" height="30" viewBox="0 0 30 30"><defs><filter id="b3" x="-50%" y="-50%" width="200%" height="200%"><feGaussianBlur stdDeviation="1.8"/></filter></defs><circle cx="14.8" cy="15" r="10" fill="#444" opacity="0.75" filter="url(#b3)"/><circle cx="14" cy="14" r="8.4" fill="#179c2b" stroke="#fff" stroke-width="1.8"/><text x="14" y="18" text-anchor="middle" font-family="Liberation Serif" font-weight="bold" font-size="12" fill="#fff">3</text></svg>
</body></html>
